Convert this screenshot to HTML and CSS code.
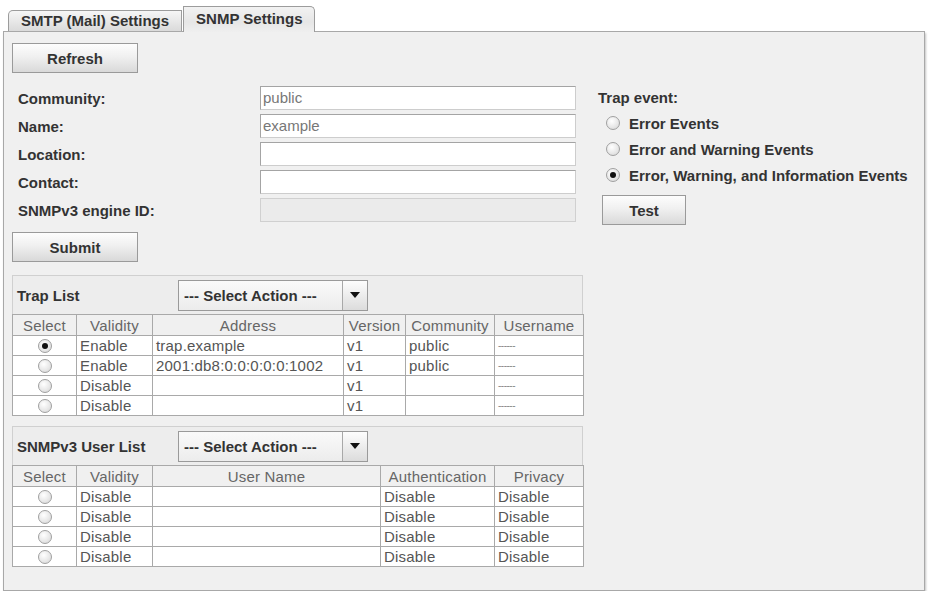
FILE: index.html
```html
<!DOCTYPE html>
<html lang="en">
<head>
    <meta charset="UTF-8">
    <title>SNMP Settings</title>
    <link rel="stylesheet" href="styles.css">
</head>
<body>
    <div class="tabs">
        <div class="tab">SMTP (Mail) Settings</div>
        <div class="tab tab-active">SNMP Settings</div>
    </div>
    <div class="panel">
        <div class="left-col">
            <button class="btn btn-wide">Refresh</button>

            <div class="form">
                <div class="form-row"><label>Community:</label><div class="field">public</div></div>
                <div class="form-row"><label>Name:</label><div class="field">example</div></div>
                <div class="form-row"><label>Location:</label><div class="field"></div></div>
                <div class="form-row"><label>Contact:</label><div class="field"></div></div>
                <div class="form-row"><label>SNMPv3 engine ID:</label><div class="field field-off"></div></div>
            </div>

            <button class="btn btn-wide btn-submit">Submit</button>

            <!-- trap list -->
            <div class="list-box">
                <div class="list-head">
                    <span class="list-title">Trap List</span>
                    <div class="combo">
                        <span class="combo-text">--- Select Action ---</span>
                        <span class="combo-btn"><svg width="10" height="6" viewBox="0 0 10 6"><polygon points="0,0 10,0 5,6" fill="#111"/></svg></span>
                    </div>
                </div>
                <table class="grid">
                    <colgroup>
                        <col class="c-sel"><col class="c-val"><col class="c-addr"><col class="c-ver"><col class="c-com"><col class="c-user">
                    </colgroup>
                    <thead>
                        <tr><th>Select</th><th>Validity</th><th>Address</th><th>Version</th><th>Community</th><th>Username</th></tr>
                    </thead>
                    <tbody>
                        <tr><td class="sel"><span class="radio on"></span></td><td>Enable</td><td>trap.example</td><td>v1</td><td>public</td><td class="dash">------</td></tr>
                        <tr><td class="sel"><span class="radio"></span></td><td>Enable</td><td>2001:db8:0:0:0:0:0:1002</td><td>v1</td><td>public</td><td class="dash">------</td></tr>
                        <tr><td class="sel"><span class="radio"></span></td><td>Disable</td><td></td><td>v1</td><td></td><td class="dash">------</td></tr>
                        <tr><td class="sel"><span class="radio"></span></td><td>Disable</td><td></td><td>v1</td><td></td><td class="dash">------</td></tr>
                    </tbody>
                </table>
            </div>

            <!-- user list -->
            <div class="list-box list-users">
                <div class="list-head">
                    <span class="list-title">SNMPv3 User List</span>
                    <div class="combo">
                        <span class="combo-text">--- Select Action ---</span>
                        <span class="combo-btn"><svg width="10" height="6" viewBox="0 0 10 6"><polygon points="0,0 10,0 5,6" fill="#111"/></svg></span>
                    </div>
                </div>
                <table class="grid">
                    <colgroup>
                        <col class="c-sel"><col class="c-val"><col class="c-uname"><col class="c-auth"><col class="c-priv">
                    </colgroup>
                    <thead>
                        <tr><th>Select</th><th>Validity</th><th>User Name</th><th>Authentication</th><th>Privacy</th></tr>
                    </thead>
                    <tbody>
                        <tr><td class="sel"><span class="radio"></span></td><td>Disable</td><td></td><td>Disable</td><td>Disable</td></tr>
                        <tr><td class="sel"><span class="radio"></span></td><td>Disable</td><td></td><td>Disable</td><td>Disable</td></tr>
                        <tr><td class="sel"><span class="radio"></span></td><td>Disable</td><td></td><td>Disable</td><td>Disable</td></tr>
                        <tr><td class="sel"><span class="radio"></span></td><td>Disable</td><td></td><td>Disable</td><td>Disable</td></tr>
                    </tbody>
                </table>
            </div>
        </div>

        <div class="right-col">
            <div class="trap-label">Trap event:</div>
            <div class="opt"><span class="radio"></span>Error Events</div>
            <div class="opt"><span class="radio"></span>Error and Warning Events</div>
            <div class="opt"><span class="radio on"></span>Error, Warning, and Information Events</div>
            <button class="btn btn-test">Test</button>
        </div>
    </div>
</body>
</html>
```

FILE: styles.css
```css
body {
    margin: 0;
    background: #fff;
    font-family: "Liberation Sans", Arial, sans-serif;
    font-size: 15px;
    color: #333;
}

/* Tabs */
.tabs {
    display: flex;
    align-items: flex-end;
    height: 31px;
    padding-left: 8px;
}
.tab {
    height: 20px;
    padding: 0 12px;
    line-height: 20px;
    font-weight: bold;
    white-space: nowrap;
    border: 1px solid #9c9c9c;
    border-bottom: none;
    border-top-left-radius: 5px;
    background: linear-gradient(#f6f6f6, #dadada);
    color: #333;
}
.tab-active {
    height: 25px;
    line-height: 24px;
    margin-left: 1px;
    margin-bottom: -1px;
    padding: 0 12px;
    border-top-left-radius: 0;
    border-top-right-radius: 5px;
    background: linear-gradient(#f2f2f2, #e6e6e6 60%, #efefef);
    position: relative;
}

/* Main panel */
.panel {
    display: flex;
    gap: 15px;
    width: 912px;
    height: 547px;
    margin-left: 3px;
    padding: 11px 0 0 8px;
    border: 1px solid #a8a8a8;
    background: #f0f0f0;
    box-shadow: 1px 2px 2px #c4c4c4;
}
.left-col {
    width: 571px;
}

.btn {
    display: block;
    height: 30px;
    border: 1px solid #9a9a9a;
    background: linear-gradient(#fdfdfd, #f0f0f0 45%, #d9d9d9);
    font-family: inherit;
    font-size: 15px;
    font-weight: bold;
    color: #333;
    padding: 0;
}
.btn-wide { width: 126px; }
.btn-submit { margin-top: 10px; }

/* Form */
.form {
    display: flex;
    flex-direction: column;
    gap: 4px;
    margin-top: 13px;
}
.form-row {
    display: grid;
    grid-template-columns: 248px 316px;
    height: 24px;
    align-items: center;
}
.form-row label {
    padding-left: 6px;
    font-weight: bold;
}
.field {
    height: 22px;
    line-height: 22px;
    padding-left: 2px;
    border: 1px solid #a4a4a4;
    border-right-color: #cdcdcd;
    border-bottom-color: #cdcdcd;
    background: #fff;
    color: #777;
}
.field-off {
    background: #ebebeb;
    border-color: #d0d0d0;
}

/* Lists */
.list-box {
    margin-top: 13px;
}
.list-users {
    margin-top: 10px;
}
.list-head {
    display: flex;
    align-items: center;
    height: 38px;
    border: 1px solid #d0d0d0;
    border-bottom: none;
    background: #ededed;
}
.list-title {
    width: 161px;
    padding-left: 4px;
    font-weight: bold;
}
.combo {
    display: flex;
    height: 29px;
    border: 1px solid #9a9a9a;
}
.combo-text {
    width: 158px;
    padding-left: 5px;
    line-height: 29px;
    font-weight: bold;
    background: linear-gradient(#fafafa, #ececec);
}
.combo-btn {
    display: flex;
    align-items: center;
    justify-content: center;
    width: 24px;
    border-left: 1px solid #a8a8a8;
    background: linear-gradient(#fdfdfd, #dcdcdc);
}

.grid {
    width: 571px;
    table-layout: fixed;
    border-collapse: collapse;
    color: #555;
    letter-spacing: 0.2px;
}
.grid th, .grid td {
    border: 1px solid #a9a9a9;
    padding: 0 0 0 3px;
    white-space: nowrap;
    overflow: hidden;
}
.grid th {
    height: 20px;
    font-weight: normal;
    text-align: center;
    padding: 0;
    background: #f0f0f0;
    color: #666;
}
.grid td {
    height: 19px;
    line-height: 17px;
    background: #fff;
}
.grid td.sel {
    text-align: center;
    padding: 0;
}
.grid td.dash {
    font-size: 10px;
    color: #888;
    letter-spacing: -0.5px;
}
.c-sel { width: 64px; }
.c-val { width: 76px; }
.c-addr { width: 191px; }
.c-ver { width: 62px; }
.c-com { width: 89px; }
.c-user { width: 89px; }
.c-uname { width: 228px; }
.c-auth { width: 114px; }
.c-priv { width: 89px; }

/* Radios */
.radio {
    display: inline-block;
    position: relative;
    width: 12px;
    height: 12px;
    border: 1px solid #a0a0a0;
    border-radius: 50%;
    background: radial-gradient(circle at 40% 35%, #ffffff, #e2e2e2 70%, #cfcfcf);
    vertical-align: -2px;
}
.radio.on::after {
    content: "";
    position: absolute;
    left: 3px;
    top: 3px;
    width: 6px;
    height: 6px;
    border-radius: 50%;
    background: #111;
}

/* Trap event column */
.right-col {
    padding-top: 43px;
}
.trap-label {
    height: 24px;
    line-height: 24px;
    font-weight: bold;
}
.opt {
    display: flex;
    align-items: center;
    gap: 9px;
    height: 26px;
    padding-left: 8px;
    font-weight: bold;
}
.btn-test {
    width: 84px;
    margin: 7px 0 0 4px;
}
```
